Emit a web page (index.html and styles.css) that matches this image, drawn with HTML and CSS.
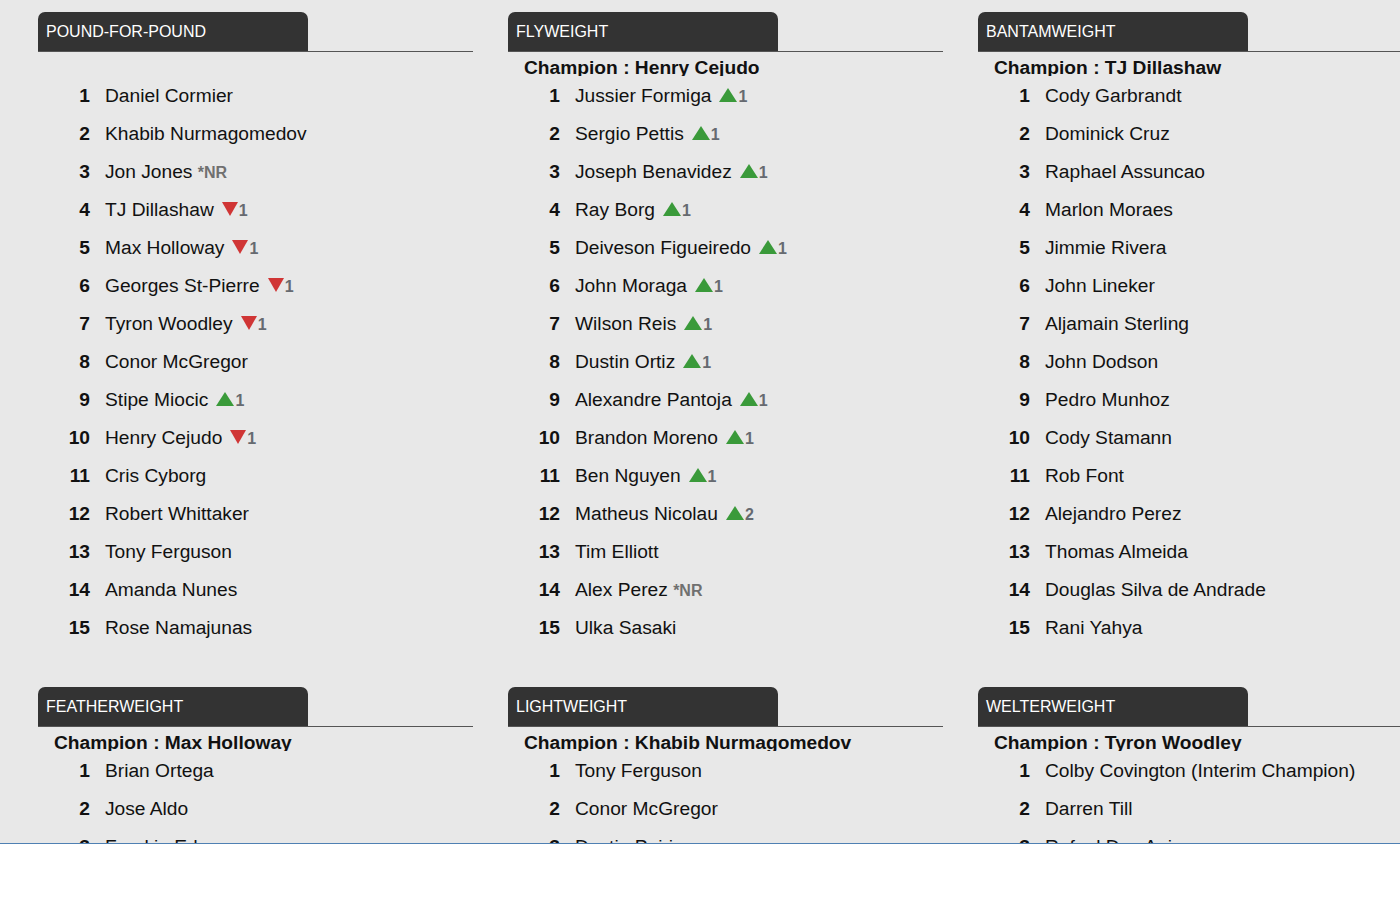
FILE: index.html
```html
<!DOCTYPE html>
<html lang="en">
<head>
<meta charset="utf-8">
<title>UFC Rankings</title>
<link rel="stylesheet" href="styles.css">
</head>
<body>
<div class="page">
  <div class="grid">

    <section class="division">
      <div class="sec-head"><div class="tab">POUND-FOR-POUND</div></div>
      <div class="champion"></div>
      <ol class="ranks">
        <li class="row"><span class="num">1</span><span class="name">Daniel Cormier</span></li>
        <li class="row"><span class="num">2</span><span class="name">Khabib Nurmagomedov</span></li>
        <li class="row"><span class="num">3</span><span class="name">Jon Jones <span class="nr">*NR</span></span></li>
        <li class="row"><span class="num">4</span><span class="name">TJ Dillashaw<span class="chg"><i class="tri down"></i>1</span></span></li>
        <li class="row"><span class="num">5</span><span class="name">Max Holloway<span class="chg"><i class="tri down"></i>1</span></span></li>
        <li class="row"><span class="num">6</span><span class="name">Georges St-Pierre<span class="chg"><i class="tri down"></i>1</span></span></li>
        <li class="row"><span class="num">7</span><span class="name">Tyron Woodley<span class="chg"><i class="tri down"></i>1</span></span></li>
        <li class="row"><span class="num">8</span><span class="name">Conor McGregor</span></li>
        <li class="row"><span class="num">9</span><span class="name">Stipe Miocic<span class="chg"><i class="tri up"></i>1</span></span></li>
        <li class="row"><span class="num">10</span><span class="name">Henry Cejudo<span class="chg"><i class="tri down"></i>1</span></span></li>
        <li class="row"><span class="num">11</span><span class="name">Cris Cyborg</span></li>
        <li class="row"><span class="num">12</span><span class="name">Robert Whittaker</span></li>
        <li class="row"><span class="num">13</span><span class="name">Tony Ferguson</span></li>
        <li class="row"><span class="num">14</span><span class="name">Amanda Nunes</span></li>
        <li class="row"><span class="num">15</span><span class="name">Rose Namajunas</span></li>
      </ol>
    </section>

    <section class="division">
      <div class="sec-head"><div class="tab">FLYWEIGHT</div></div>
      <div class="champion">Champion : Henry Cejudo</div>
      <ol class="ranks">
        <li class="row"><span class="num">1</span><span class="name">Jussier Formiga<span class="chg"><i class="tri up"></i>1</span></span></li>
        <li class="row"><span class="num">2</span><span class="name">Sergio Pettis<span class="chg"><i class="tri up"></i>1</span></span></li>
        <li class="row"><span class="num">3</span><span class="name">Joseph Benavidez<span class="chg"><i class="tri up"></i>1</span></span></li>
        <li class="row"><span class="num">4</span><span class="name">Ray Borg<span class="chg"><i class="tri up"></i>1</span></span></li>
        <li class="row"><span class="num">5</span><span class="name">Deiveson Figueiredo<span class="chg"><i class="tri up"></i>1</span></span></li>
        <li class="row"><span class="num">6</span><span class="name">John Moraga<span class="chg"><i class="tri up"></i>1</span></span></li>
        <li class="row"><span class="num">7</span><span class="name">Wilson Reis<span class="chg"><i class="tri up"></i>1</span></span></li>
        <li class="row"><span class="num">8</span><span class="name">Dustin Ortiz<span class="chg"><i class="tri up"></i>1</span></span></li>
        <li class="row"><span class="num">9</span><span class="name">Alexandre Pantoja<span class="chg"><i class="tri up"></i>1</span></span></li>
        <li class="row"><span class="num">10</span><span class="name">Brandon Moreno<span class="chg"><i class="tri up"></i>1</span></span></li>
        <li class="row"><span class="num">11</span><span class="name">Ben Nguyen<span class="chg"><i class="tri up"></i>1</span></span></li>
        <li class="row"><span class="num">12</span><span class="name">Matheus Nicolau<span class="chg"><i class="tri up"></i>2</span></span></li>
        <li class="row"><span class="num">13</span><span class="name">Tim Elliott</span></li>
        <li class="row"><span class="num">14</span><span class="name">Alex Perez <span class="nr">*NR</span></span></li>
        <li class="row"><span class="num">15</span><span class="name">Ulka Sasaki</span></li>
      </ol>
    </section>

    <section class="division">
      <div class="sec-head"><div class="tab">BANTAMWEIGHT</div></div>
      <div class="champion">Champion : TJ Dillashaw</div>
      <ol class="ranks">
        <li class="row"><span class="num">1</span><span class="name">Cody Garbrandt</span></li>
        <li class="row"><span class="num">2</span><span class="name">Dominick Cruz</span></li>
        <li class="row"><span class="num">3</span><span class="name">Raphael Assuncao</span></li>
        <li class="row"><span class="num">4</span><span class="name">Marlon Moraes</span></li>
        <li class="row"><span class="num">5</span><span class="name">Jimmie Rivera</span></li>
        <li class="row"><span class="num">6</span><span class="name">John Lineker</span></li>
        <li class="row"><span class="num">7</span><span class="name">Aljamain Sterling</span></li>
        <li class="row"><span class="num">8</span><span class="name">John Dodson</span></li>
        <li class="row"><span class="num">9</span><span class="name">Pedro Munhoz</span></li>
        <li class="row"><span class="num">10</span><span class="name">Cody Stamann</span></li>
        <li class="row"><span class="num">11</span><span class="name">Rob Font</span></li>
        <li class="row"><span class="num">12</span><span class="name">Alejandro Perez</span></li>
        <li class="row"><span class="num">13</span><span class="name">Thomas Almeida</span></li>
        <li class="row"><span class="num">14</span><span class="name">Douglas Silva de Andrade</span></li>
        <li class="row"><span class="num">15</span><span class="name">Rani Yahya</span></li>
      </ol>
    </section>

    <section class="division">
      <div class="sec-head"><div class="tab">FEATHERWEIGHT</div></div>
      <div class="champion">Champion : Max Holloway</div>
      <ol class="ranks">
        <li class="row"><span class="num">1</span><span class="name">Brian Ortega</span></li>
        <li class="row"><span class="num">2</span><span class="name">Jose Aldo</span></li>
        <li class="row"><span class="num">3</span><span class="name">Frankie Edgar</span></li>
      </ol>
    </section>

    <section class="division">
      <div class="sec-head"><div class="tab">LIGHTWEIGHT</div></div>
      <div class="champion">Champion : Khabib Nurmagomedov</div>
      <ol class="ranks">
        <li class="row"><span class="num">1</span><span class="name">Tony Ferguson</span></li>
        <li class="row"><span class="num">2</span><span class="name">Conor McGregor</span></li>
        <li class="row"><span class="num">3</span><span class="name">Dustin Poirier</span></li>
      </ol>
    </section>

    <section class="division">
      <div class="sec-head"><div class="tab">WELTERWEIGHT</div></div>
      <div class="champion">Champion : Tyron Woodley</div>
      <ol class="ranks">
        <li class="row"><span class="num">1</span><span class="name">Colby Covington (Interim Champion)</span></li>
        <li class="row"><span class="num">2</span><span class="name">Darren Till</span></li>
        <li class="row"><span class="num">3</span><span class="name">Rafael Dos Anjos</span></li>
      </ol>
    </section>

  </div>
</div>
</body>
</html>
```

FILE: styles.css
```css
html, body {
  margin: 0;
  padding: 0;
  background: #ffffff;
}

body {
  font-family: "Liberation Sans", Arial, Helvetica, sans-serif;
  color: #111111;
}

.page {
  height: 843px;
  background: #e8e8e8;
  border-bottom: 1px solid #4f80b3;
  overflow: hidden;
}

.grid {
  display: grid;
  grid-template-columns: repeat(3, 435px);
  column-gap: 35px;
  row-gap: 41px;
  padding: 12px 0 0 38px;
  width: max-content;
}

.division {
  display: flex;
  flex-direction: column;
}

.sec-head {
  display: flex;
  border-bottom: 1px solid #555555;
}

.tab {
  width: 270px;
  height: 39px;
  box-sizing: border-box;
  padding-left: 8px;
  line-height: 39px;
  font-size: 16px;
  color: #ffffff;
  background: #333333;
  border-radius: 7px 7px 0 0;
}

.champion {
  height: 24px;
  box-sizing: border-box;
  padding: 5px 0 0 16px;
  line-height: 22px;
  font-size: 19.2px;
  font-weight: bold;
  color: #111111;
  overflow: hidden;
}

.ranks {
  list-style: none;
  margin: 0;
  padding: 0;
}

.row {
  display: flex;
  height: 38px;
  box-sizing: border-box;
  padding: 2px 0 0 22px;
  line-height: 36px;
  font-size: 19.2px;
  white-space: nowrap;
}

.num {
  width: 30px;
  text-align: right;
  font-weight: bold;
  flex: none;
}

.name {
  margin-left: 15px;
}

.nr {
  font-size: 16px;
  font-weight: bold;
  color: #707070;
}

.chg {
  margin-left: 8px;
  font-size: 16px;
  font-weight: bold;
  color: #666a70;
}

.tri {
  display: inline-block;
  width: 0;
  height: 0;
  vertical-align: baseline;
  margin-right: 1px;
}

.tri.up {
  border-left: 9px solid transparent;
  border-right: 9px solid transparent;
  border-bottom: 14px solid #3a9a3a;
}

.tri.down {
  border-left: 8.5px solid transparent;
  border-right: 8.5px solid transparent;
  border-top: 14px solid #d03535;
}
```
